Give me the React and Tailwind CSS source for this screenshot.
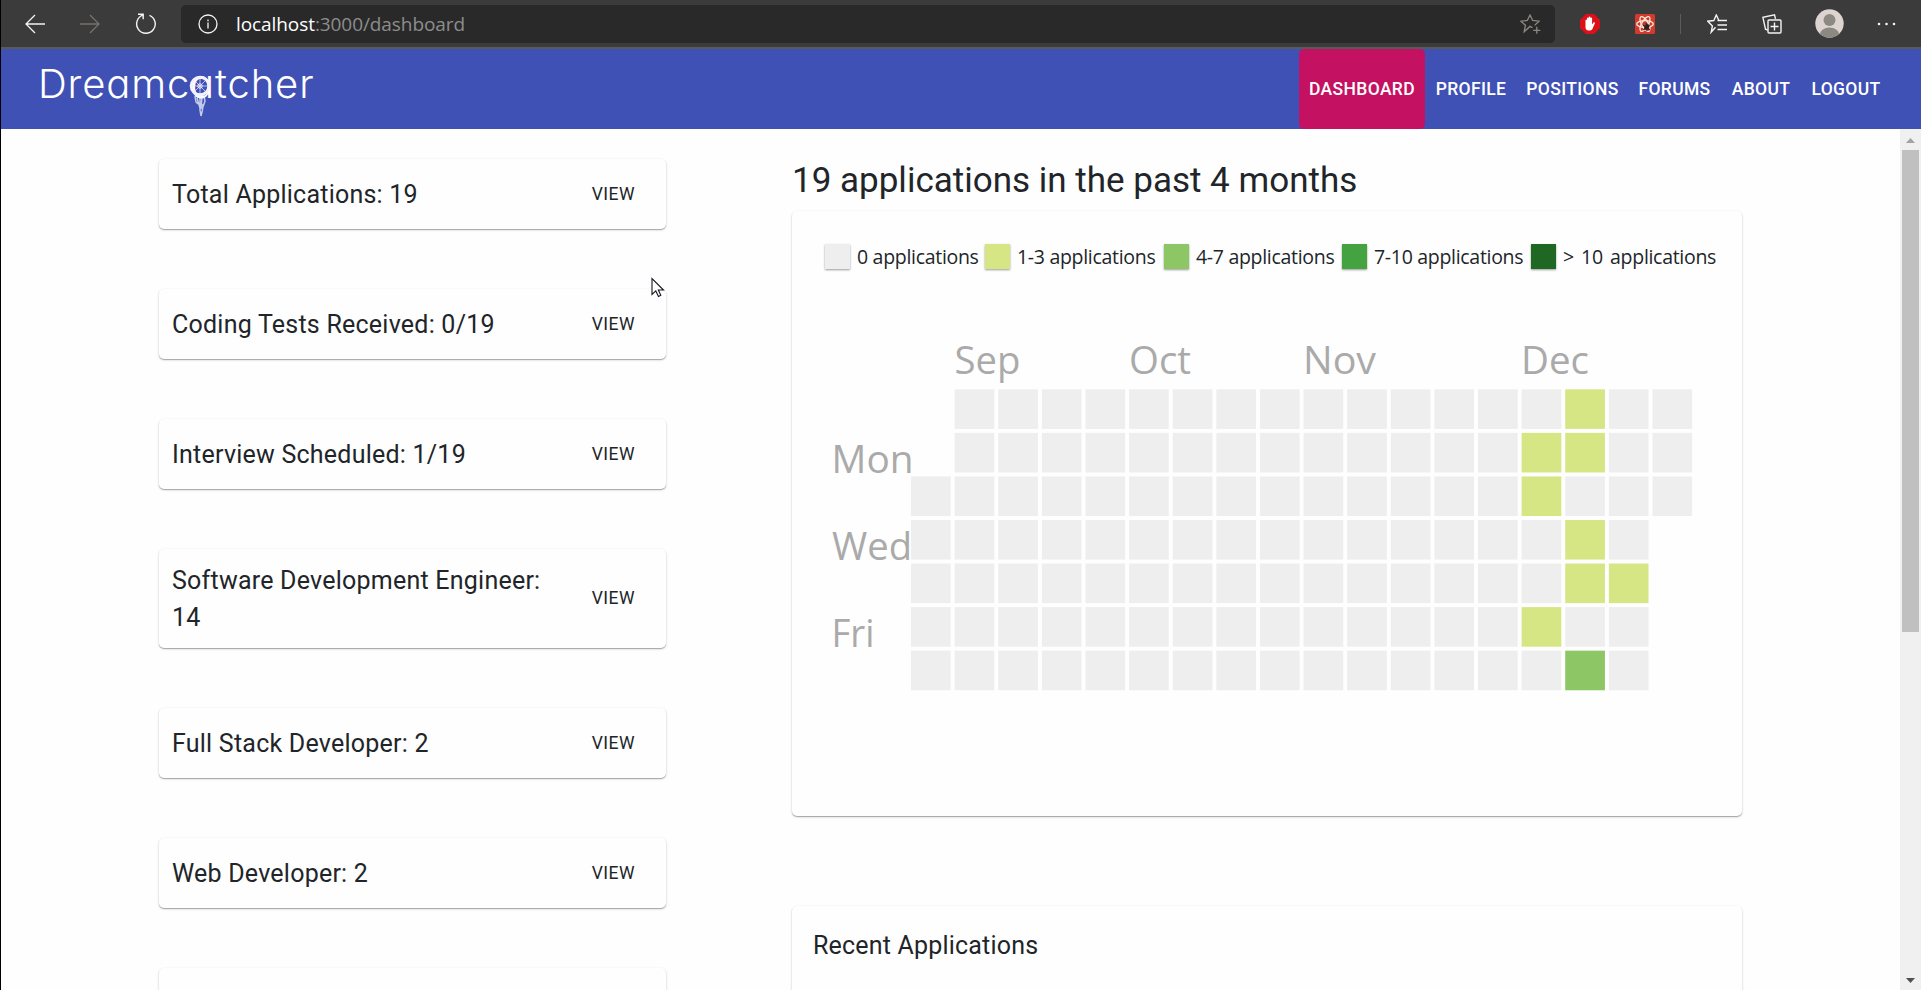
import React from "react";

const stats = [
  { label: "Total Applications: 19", h: "h-[70px]" },
  { label: "Coding Tests Received: 0/19", h: "h-[70px]" },
  { label: "Interview Scheduled: 1/19", h: "h-[70px]" },
  { label: "Software Development Engineer: 14", h: "h-[99px]" },
  { label: "Full Stack Developer: 2", h: "h-[70px]" },
  { label: "Web Developer: 2", h: "h-[70px]" },
  { label: "", h: "h-[70px]" },
];

const legend = [
  { label: "0 applications", bg: "bg-[#eeeeee]", w: "w-[160px]" },
  { label: "1-3 applications", bg: "bg-[#d6e685]", w: "w-[179px]" },
  { label: "4-7 applications", bg: "bg-[#8cc665]", w: "w-[178px]" },
  { label: "7-10 applications", bg: "bg-[#44a340]", w: "w-[189px]" },
  { label: "> 10 applications", bg: "bg-[#1e6823]", w: "w-[189px]" },
];

const cardShadow =
  "rounded-[5px] bg-[#fefefe] shadow-[0_1px_1px_rgba(0,0,0,0.28),0_1px_3px_rgba(0,0,0,0.14)]";

const levels = {
  "14-1": "#d6e685",
  "14-2": "#d6e685",
  "14-5": "#d6e685",
  "15-0": "#d6e685",
  "15-1": "#d6e685",
  "15-3": "#d6e685",
  "15-4": "#d6e685",
  "15-6": "#8cc665",
  "16-4": "#d6e685",
};

function Browser() {
  return (
    <div className="flex h-[49px] shrink-0 items-center border-b-2 border-[#5a5a5a] bg-[#3b3b3b] pl-[24px] text-white">
      <svg className="h-5 w-5" viewBox="0 0 20 20" fill="none" stroke="#f4f4f4" strokeWidth="1.3">
        <path d="M20 10H1M10 1L1 10l9 9" />
      </svg>
      <svg className="ml-[35px] h-5 w-5" viewBox="0 0 20 20" fill="none" stroke="#77736c" strokeWidth="1.3">
        <path d="M0 10h19M10 1l9 9-9 9" />
      </svg>
      <svg className="ml-[35px] h-[22px] w-[22px]" viewBox="0 0 22 22" fill="none" stroke="#f4f4f4" strokeWidth="1.4">
        <path d="M14.5 2.4a9.3 9.3 0 1 1-6.6-.2M3 1.3h5.2v5" />
      </svg>
      <div className="ml-[24px] flex h-[38px] w-[1374px] items-center rounded-[5px] bg-[#292929] pl-[17px] pr-[14px]">
        <svg className="h-5 w-5" viewBox="0 0 20 20" fill="none" stroke="#f4f4f4" strokeWidth="1.3">
          <circle cx="10" cy="10" r="9" />
          <path d="M10 8.5V14.5M10 5.5v1.7" />
        </svg>
        <div className="ml-[18px] flex-1 whitespace-nowrap pt-px font-['Open_Sans','Noto_Sans',sans-serif] text-[19px] leading-none tracking-[-0.08px] text-[#8d8d8d]">
          <span className="text-white">localhost</span>:3000/dashboard
        </div>
        <svg className="h-[20px] w-[21px]" viewBox="0 0 21 20" fill="none" stroke="#8b8982" strokeWidth="1.3">
          <path d="M12.5 13.7L10 12.4 4.2 17.8 5.4 11.3 1 7.2l6.3-.7L10 1l2.7 5.5 6.3.7-4.4 4.2M16.8 12.8v7M13.3 16.3h7" />
        </svg>
      </div>
      <svg className="ml-[25px] h-5 w-5" viewBox="0 0 20 20">
        <path d="M6 0h8l6 6v8l-6 6H6l-6-6V6z" fill="#dc1018" />
        <path d="M5.500 9.500V6.200c0-1.100 1.500-1.100 1.500 0V4.300c0-1.200 1.700-1.200 1.700 0v-.8c0-1.200 1.700-1.200 1.700 0v1c0-1.200 1.700-1.200 1.700 0v6l1.300-1.800c.8-.9 1.900-.2 1.400.8l-2.300 5.200c-.5 1-1.300 1.700-2.400 1.700H8.500c-2 0-3-1.400-3-3z" fill="#fff" />
      </svg>
      <svg className="ml-[35px] h-5 w-5" viewBox="0 0 20 20">
        <rect width="20" height="20" rx="1.500" fill="#d23a2c" />
        <g fill="none" stroke="#fbe9dc" strokeWidth="1.300">
          <ellipse cx="10" cy="10" rx="8.300" ry="3.300" />
          <ellipse cx="10" cy="10" rx="8.300" ry="3.300" transform="rotate(60 10 10)" />
          <ellipse cx="10" cy="10" rx="8.300" ry="3.300" transform="rotate(120 10 10)" />
        </g>
        <ellipse cx="11.800" cy="13" rx="2.200" ry="3.200" transform="rotate(35 11.800 13)" fill="#2a2320" />
        <path d="M8 11l7 5M8.500 16l6-5M11 9l1 8" stroke="#2a2320" strokeWidth="1.100" />
      </svg>
      <div className="ml-[25px] h-5 w-px bg-[#5c5c5c]" />
      <svg className="ml-[26px] h-5 w-5" viewBox="0 0 20 20" fill="none" stroke="#f4f4f4" strokeWidth="1.400">
        <path d="M8.500 13.300L4.200 18.200 5.400 12 .8 7.200l6-.7L9.300 1l2.500 5.300M10.500 6.500H20M10.500 11H20M10.500 15.500H20" />
      </svg>
      <svg className="ml-[35px] h-5 w-5" viewBox="0 0 20 20" fill="none" stroke="#f4f4f4" strokeWidth="1.400">
        <rect x="6" y="6" width="13" height="13" rx="1" />
        <path d="M12.500 8.500v8M8.500 12.500h8M5.500 16L3.500 15.200.9 3.400 12.500.9l1 4" />
      </svg>
      <svg className="ml-[33px] h-[29px] w-[29px]" viewBox="0 0 29 29">
        <defs>
          <clipPath id="face">
            <circle cx="14.500" cy="14.500" r="14.200" />
          </clipPath>
        </defs>
        <circle cx="14.500" cy="14.500" r="14.200" fill="#ddd3d1" />
        <g fill="#8b8982" clipPath="url(#face)">
          <circle cx="14.500" cy="11" r="6" />
          <ellipse cx="14.500" cy="25.500" rx="9.500" ry="7" />
        </g>
      </svg>
      <svg className="ml-[32px] h-5 w-5" viewBox="0 0 20 20" fill="#f4f4f4">
        <circle cx="3" cy="10" r="1.300" />
        <circle cx="10.500" cy="10" r="1.300" />
        <circle cx="18" cy="10" r="1.300" />
      </svg>
    </div>
  );
}

function NavBar() {
  const item = "flex items-center justify-center";
  return (
    <nav className="flex h-20 shrink-0 items-start justify-between bg-[#3f51b5] pl-[37px] pr-[30px]">
      <div className="relative mt-[10px] whitespace-nowrap font-['Inter',sans-serif] text-[40px] font-[350] leading-[50px] tracking-[0.85px] text-white [font-feature-settings:'cv11']">
        Dreamcatcher
        <svg className="absolute left-[151px] top-[15px] h-[43px] w-[24px]" viewBox="0 0 24 43" fill="none" stroke="#f2f4fd">
          <circle cx="11" cy="12" r="8.800" strokeWidth="3" />
          <circle cx="11" cy="12" r="2.200" strokeWidth="1" />
          <path d="M11 4v16M3 12h16M5.500 6.500l11 11M16.500 6.500l-11 11" strokeWidth="0.900" strokeOpacity=".75" />
          <path d="M6 22l1 6 2 2M11 22v14l1 6 1.500-6L14 30M15 22l1 5-2 6M8 24l3 10M13 23l-1 12" strokeWidth="1.500" strokeOpacity=".75" />
        </svg>
      </div>
      <div className="flex h-full font-['Roboto',sans-serif] text-[17.5px] font-medium tracking-[0.35px] text-white">
        <span className={item + " w-[126px] rounded-[5px] bg-[#c51162]"}>DASHBOARD</span>
        <span className={item + " w-[92px]"}>PROFILE</span>
        <span className={item + " w-[111px]"}>POSITIONS</span>
        <span className={item + " w-[93px]"}>FORUMS</span>
        <span className={item + " w-[80px]"}>ABOUT</span>
        <span className={item + " w-[90px]"}>LOGOUT</span>
      </div>
    </nav>
  );
}

function Heatmap() {
  const cells = [];
  for (let c = 0; c < 18; c++) {
    for (let r = 0; r < 7; r++) {
      if (c === 0 && r < 2) continue;
      if (c === 17 && r > 2) continue;
      cells.push(
        <rect
          key={c + "-" + r}
          x={86 + c * 43.615}
          y={59.3 + r * 43.56}
          width="39.7"
          height="39.6"
          fill={levels[c + "-" + r] || "#eeeeee"}
        />
      );
    }
  }
  return (
    <svg className="mt-[61px] h-[380px] w-[880px]" viewBox="0 0 880 380">
      <g fill="#aaaaaa" fontFamily="'Open Sans','Noto Sans',sans-serif" fontSize="39">
        <text x="129.500" y="43.500" textLength="66" lengthAdjust="spacingAndGlyphs">Sep</text>
        <text x="304" y="43.500" textLength="62" lengthAdjust="spacingAndGlyphs">Oct</text>
        <text x="478" y="43.500" textLength="73" lengthAdjust="spacingAndGlyphs">Nov</text>
        <text x="696" y="43.500" textLength="68" lengthAdjust="spacingAndGlyphs">Dec</text>
        <text x="6.500" y="143" textLength="82" lengthAdjust="spacingAndGlyphs">Mon</text>
        <text x="7" y="230" textLength="80" lengthAdjust="spacingAndGlyphs">Wed</text>
        <text x="6.500" y="317" textLength="43" lengthAdjust="spacingAndGlyphs">Fri</text>
      </g>
      {cells}
    </svg>
  );
}

export default function App() {
  return (
    <div className="flex h-[990px] w-[1921px] flex-col overflow-hidden border-l border-black bg-[#fefefe] font-['Roboto',sans-serif] text-[#212529]">
      <Browser />
      <NavBar />
      <div className="flex min-h-0 flex-1">
        <main className="flex min-w-0 flex-1 overflow-hidden pl-[158px]">
          <section className="flex w-[507px] shrink-0 flex-col gap-[60px] pt-[30px]">
            {stats.map((s, i) => (
              <div key={i} className={s.h + " flex shrink-0 items-center justify-between pl-[13px] pr-[31px] " + cardShadow}>
                {s.label && (
                  <>
                    <div className="w-[380px] text-[25px] leading-[37px] tracking-[0.23px]">{s.label}</div>
                    <div className="text-[17.5px] tracking-[0.5px]">VIEW</div>
                  </>
                )}
              </div>
            ))}
          </section>
          <section className="ml-[126px] flex w-[950px] shrink-0 flex-col pt-[31px]">
            <h3 className="h-[51px] shrink-0 whitespace-nowrap text-[35px] leading-[42px]">19 applications in the past 4 months</h3>
            <div className={"flex h-[605px] shrink-0 flex-col pl-[33px] pt-[33px] " + cardShadow}>
              <div className="flex font-['Open_Sans','Noto_Sans',sans-serif] text-[19.5px] leading-[25px]">
                {legend.map((l) => (
                  <div key={l.label} className={"flex shrink-0 items-center gap-[7px] " + l.w}>
                    <span className={"h-[25px] w-[25px] shrink-0 shadow-[0_1px_2px_rgba(0,0,0,0.4)] " + l.bg} />
                    <span className={(l.label[0] === ">" ? "[word-spacing:2.5px] " : "") + "whitespace-nowrap tracking-[-0.3px]"}>{l.label}</span>
                  </div>
                ))}
              </div>
              <Heatmap />
            </div>
            <div className={"mt-[90px] h-[200px] shrink-0 px-[21px] pt-[21px] " + cardShadow}>
              <div className="text-[25px] leading-[38px] tracking-[0.19px]">Recent Applications</div>
            </div>
          </section>
        </main>
        <aside className="flex w-[21px] flex-col items-center bg-[#f0f0f0]">
          <svg className="h-[21px] w-[21px] shrink-0" viewBox="0 0 21 21">
            <path d="M6 14l4.500-5 4.500 5z" fill="#a3a3a3" />
          </svg>
          <div className="h-[482px] w-[17px] shrink-0 bg-[#c0c0c0]" />
          <div className="flex-1" />
          <svg className="h-[21px] w-[21px] shrink-0" viewBox="0 0 21 21">
            <path d="M6 9l4.500 5 4.500-5z" fill="#505050" />
          </svg>
        </aside>
      </div>
      <svg className="pointer-events-none absolute left-[651px] top-[277px] h-[21px] w-[14px]" viewBox="0 0 14 21">
        <path d="M1 1.500v16l3.800-3.600 2.700 5.600 2.300-1.200-2.500-5.300H12.500z" fill="#fff" stroke="#15151f" strokeWidth="1.100" />
      </svg>
    </div>
  );
}
